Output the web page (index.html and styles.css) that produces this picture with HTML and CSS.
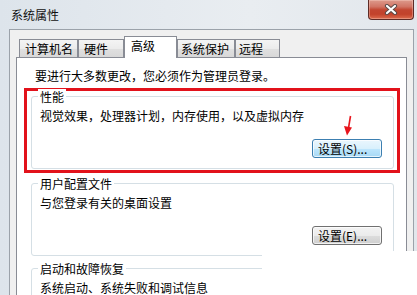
FILE: index.html
```html
<!DOCTYPE html>
<html lang="zh-CN">
<head>
  <meta charset="UTF-8" />
  <title>系统属性</title>
  <link rel="stylesheet" href="styles.css">
</head>
<body>
  <div class="window">
    <header class="titlebar">
      <span class="title">系统属性</span>
      <button class="close" aria-label="关闭">
        <svg width="14" height="11" viewBox="0 0 14 11">
          <path d="M3 2 L11 9 M11 2 L3 9" stroke="#5b4a48" stroke-width="4.2" stroke-linecap="round" fill="none" />
          <path d="M3 2 L11 9 M11 2 L3 9" stroke="#fff" stroke-width="2.2" stroke-linecap="round" fill="none" />
        </svg>
      </button>
    </header>

    <div class="client">
      <ul class="tabs" role="tablist">
        <li class="tab tab-1" role="tab">计算机名</li>
        <li class="tab tab-2" role="tab">硬件</li>
        <li class="tab tab-3 selected" role="tab" aria-selected="true">高级</li>
        <li class="tab tab-4" role="tab">系统保护</li>
        <li class="tab tab-5" role="tab">远程</li>
      </ul>

      <section class="panel" role="tabpanel">
        <p class="notice">要进行大多数更改，您必须作为管理员登录。</p>

        <div class="highlight">
          <div class="group">
            <span class="group-title">性能</span>
            <p class="group-desc">视觉效果，处理器计划，内存使用，以及虚拟内存</p>
            <div class="group-actions">
              <button class="btn btn-hot">设置(S)...</button>
            </div>
          </div>
        </div>

        <div class="group group-outer group-profile">
          <span class="group-title">用户配置文件</span>
          <p class="group-desc">与您登录有关的桌面设置</p>
          <div class="group-actions">
            <button class="btn">设置(E)...</button>
          </div>
        </div>

        <div class="group group-outer group-startup">
          <span class="group-title">启动和故障恢复</span>
          <p class="group-desc">系统启动、系统失败和调试信息</p>
        </div>
      </section>
    </div>

    <!-- annotation arrow and the watermark patch -->
    <svg class="arrow" width="16" height="24" viewBox="0 0 16 24">
      <path d="M10.5 2 L8.5 14" stroke="#e8141c" stroke-width="1.6" fill="none" />
      <polygon points="4,12 12,13.5 7,21.5" fill="#e8141c" />
    </svg>
    <div class="watermark"></div>
  </div>
</body>
</html>
```

FILE: styles.css
```css
*, *::before, *::after {
  box-sizing: border-box;
}
body {
  margin: 0;
  width: 417px;
  height: 295px;
  overflow: hidden;
  font-family: "Noto Sans CJK SC", "Noto Sans", sans-serif;
  font-size: 12px;
  color: #000;
  background: #e4e9ee;
}

.window {
  position: relative;
  height: 295px;
  overflow: hidden;
  background: linear-gradient(to right, #dde4eb, #e9edf1 60%, #e2e7ec);
}

/* Title bar */
.titlebar {
  display: flex;
  justify-content: space-between;
  align-items: flex-start;
  height: 29px;
  padding: 0 3px 0 11px;
}
.title {
  margin-top: 7px;
  line-height: 16px;
  color: #111;
}
.close {
  display: flex;
  align-items: center;
  justify-content: center;
  width: 46px;
  height: 20px;
  margin: 0;
  padding: 0;
  border: 1px solid #5d2b26;
  border-top: none;
  border-radius: 0 0 4px 4px;
  background: linear-gradient(#dd9a8c 0%, #d17565 35%, #c24530 52%, #c2422b 75%, #dc6c4e 100%);
  box-shadow: inset 0 0 0 1px rgba(255, 220, 210, 0.35);
}

/* Client area */
.client {
  margin: 0 3px 0 9px;
  padding: 6px 6px 0 6px;
  border: 1px solid #9ba2aa;
  border-bottom: none;
  background: #f0f0f0;
}

/* Tabs */
.tabs {
  display: flex;
  align-items: flex-end;
  height: 21px;
  margin: 0;
  padding: 0 0 0 3px;
  list-style: none;
}
.tab {
  height: 18px;
  padding: 1px 0 0 5px;
  line-height: 16px;
  border: 1px solid #898c95;
  border-bottom: none;
  background: linear-gradient(#f4f4f4 0%, #ececec 50%, #e0e0e0 51%, #d8d8d8 100%);
  white-space: nowrap;
}
.tab + .tab {
  margin-left: 0;
}
.tab-1 { width: 59px; }
.tab-2 { width: 46px; }
.tab-3 { width: 53px; }
.tab-4 { width: 58px; padding-left: 3px; }
.tab-5 { width: 45px; margin-left: 1px; padding-left: 3px; }
.tab.selected {
  position: relative;
  z-index: 1;
  height: 22px;
  margin-bottom: -1px;
  padding-left: 6px;
  background: #fff;
}

/* Tab panel */
.panel {
  height: 250px;
  border: 1px solid #898c95;
  background: #fff;
}
.notice {
  margin: 0;
  padding: 10px 0 0 18px;
  line-height: 16px;
}

.highlight {
  margin: 4px 6px 0 7px;
  padding: 5px 3px 1px 4px;
  border: 3px solid #e2121b;
}

/* Group boxes */
.group {
  padding: 0 11px 10px 8px;
  border: 1px solid #d5dfe5;
  border-radius: 3px;
}
.group-outer {
  margin: 0 12px 0 14px;
}
.group-profile {
  margin-top: 10px;
}
.group-startup {
  margin-top: 12px;
}
.group-title {
  display: block;
  width: fit-content;
  margin: -8px 0 0 -2px;
  padding: 0 2px;
  line-height: 16px;
  background: #fff;
}
.group-desc {
  margin: 3px 0 0 0;
  line-height: 16px;
}
.group-actions {
  display: flex;
  justify-content: flex-end;
  margin-top: 15px;
}

/* Buttons */
.btn {
  width: 70px;
  height: 19px;
  margin: 0;
  padding: 0 0 0 5px;
  font-family: inherit;
  font-size: 12px;
  line-height: 16px;
  text-align: left;
  color: #000;
  border: 1px solid #707070;
  border-radius: 3px;
  background: linear-gradient(#f3f3f3 0%, #ebebeb 50%, #dddddd 51%, #cfcfcf 100%);
  box-shadow: inset 0 0 0 1px rgba(255, 255, 255, 0.7);
}
.btn-hot {
  border-color: #3c7fb1;
  background: linear-gradient(#eaf6fd 0%, #d9f0fc 50%, #bee6fd 51%, #a7d9f5 100%);
}

/* Overlays */
.arrow {
  position: absolute;
  left: 340px;
  top: 114px;
}
.watermark {
  position: absolute;
  left: 262px;
  top: 251px;
  right: 0;
  bottom: 0;
  background: #fff;
}
```
